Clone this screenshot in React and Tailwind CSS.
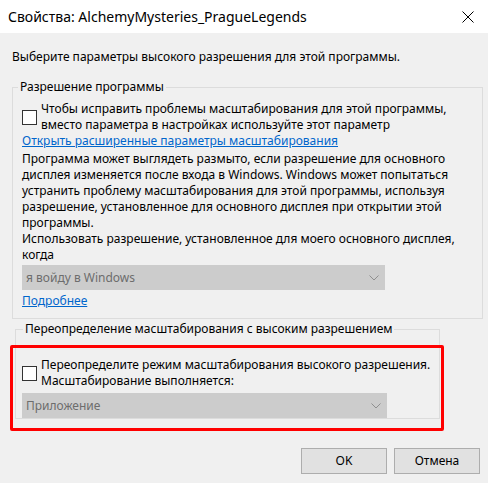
import React from 'react';

function Checkbox() {
  return <span className="w-[15px] h-[15px] shrink-0 bg-white border border-[#333333]" />;
}

function Chevron() {
  return (
    <svg width="10" height="6" viewBox="0 0 10 6" className="shrink-0">
      <path d="M0.5 0.5 L5 5 L9.5 0.5" fill="none" stroke="#8f8f8f" strokeWidth="1" />
    </svg>
  );
}

function Select({ value, width }) {
  return (
    <div
      className={`h-[25px] bg-[#cccccc] flex items-center justify-between pl-[4px] pr-[6px] text-[#6d6d6d] ${width}`}
    >
      <span>{value}</span>
      <Chevron />
    </div>
  );
}

export default function App() {
  return (
    <div
      className="relative w-[488px] h-[483px] bg-[#f0f0f0] text-black text-[12px] leading-4 overflow-hidden"
      style={{ fontFamily: '"Noto Sans", "Liberation Sans", sans-serif' }}
    >
      {/* title bar */}
      <div className="h-[33px] bg-white flex items-center justify-between pl-[8px] pr-[14px]">
        <span className="text-[14px] leading-5 text-black">Свойства: AlchemyMysteries_PragueLegends</span>
        <svg width="12" height="12" viewBox="0 0 12 12">
          <path d="M0.5 0.5 L11.5 11.5 M11.5 0.5 L0.5 11.5" stroke="#000" strokeWidth="1" />
        </svg>
      </div>

      <p className="mt-[16px] ml-[12px]">Выберите параметры высокого разрешения для этой программы.</p>

      {/* group 1 */}
      <fieldset className="mt-[14px] ml-[12px] w-[471px] border border-[#dcdcdc] pl-[9px] pr-[8px] pb-[9px]">
        <legend className="ml-[-4px] px-[2px] leading-4">Разрешение программы</legend>
        <div className="mt-[6px] flex items-center gap-[4px]">
          <Checkbox />
          <span>
            Чтобы исправить проблемы масштабирования для этой программы,
            <br />
            вместо параметра в настройках используйте этот параметр
          </span>
        </div>
        <a className="block text-[#0066cc] underline">Открыть расширенные параметры масштабирования</a>
        <p className="mt-[2px]">
          Программа может выглядеть размыто, если разрешение для основного дисплея изменяется после входа в Windows.
          Windows может попытаться устранить проблему масштабирования для этой программы, используя разрешение,
          установленное для основного дисплея при открытии этой программы.
        </p>
        <p>Использовать разрешение, установленное для моего основного дисплея, когда</p>
        <div className="mt-[2px]">
          <Select value="я войду в Windows" width="w-[363px]" />
        </div>
        <a className="block mt-[3px] w-fit text-[#0066cc] underline">Подробнее</a>
      </fieldset>

      {/* group 2 */}
      <fieldset className="mt-[2px] ml-[15px] w-[425px] border border-[#dcdcdc] pl-[6px]">
        <legend className="ml-[1px] px-[2px] leading-4">Переопределение масштабирования с высоким разрешением</legend>
        <div className="mt-[20px] flex items-center gap-[4px]">
          <Checkbox />
          <span>
            Переопределите режим масштабирования высокого разрешения.
            <br />
            Масштабирование выполняется:
          </span>
        </div>
        <div className="mt-[4px]">
          <Select value="Приложение" width="w-[365px]" />
        </div>
      </fieldset>

      {/* buttons */}
      <div className="mt-[29px] flex justify-end gap-[7px] pr-[8px]">
        <button className="w-[86px] h-[26px] bg-[#e1e1e1] border border-[#adadad]">OK</button>
        <button className="w-[86px] h-[26px] bg-[#e1e1e1] border border-[#adadad]">Отмена</button>
      </div>

      {/* red highlight annotation */}
      <div className="absolute left-[10px] top-[345px] w-[434px] h-[86px] border-[3px] border-[#ff0000] rounded-[2px] pointer-events-none" />
    </div>
  );
}
